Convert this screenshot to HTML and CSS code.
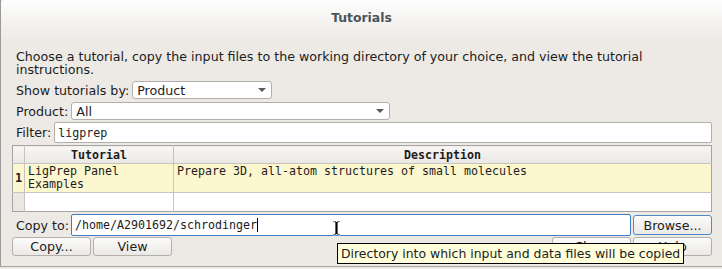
FILE: index.html
```html
<!DOCTYPE html>
<html lang="en">
  <head>
    <meta charset="utf-8" />
    <title>Tutorials</title>
    <link rel="stylesheet" href="styles.css">
  </head>
  <body>
    <div class="window">
      <div class="titlebar">Tutorials</div>
      <div class="content">
        <p class="intro">Choose a tutorial, copy the input files to the working directory of your choice, and view the tutorial instructions.</p>
        <div class="row row-show">
          <span class="field-label">Show tutorials by:</span>
          <div class="combo combo-short"><span>Product</span><span class="arrow"></span></div>
        </div>
        <div class="row row-product">
          <span class="field-label">Product:</span>
          <div class="combo combo-wide"><span>All</span><span class="arrow"></span></div>
        </div>
        <div class="row row-filter">
          <span class="field-label">Filter:</span>
          <div class="text-input filter-input">ligprep</div>
        </div>
        <table class="tutorials">
          <colgroup>
            <col class="col-num">
            <col class="col-name">
            <col class="col-desc">
          </colgroup>
          <thead>
            <tr>
              <th class="corner"></th>
              <th>Tutorial</th>
              <th>Description</th>
            </tr>
          </thead>
          <tbody>
            <tr class="selected">
              <td class="num">1</td>
              <td>LigPrep Panel<br>Examples</td>
              <td>Prepare 3D, all-atom structures of small molecules</td>
            </tr>
            <tr class="empty">
              <td class="num"></td>
              <td></td>
              <td></td>
            </tr>
          </tbody>
        </table>
        <div class="row row-copy">
          <span class="field-label">Copy to:</span>
          <div class="text-input copy-input focused">/home/A2901692/schrodinger<span class="caret"></span></div>
          <button class="btn btn-browse">Browse...</button>
        </div>
        <div class="row row-buttons">
          <button class="btn">Copy...</button>
          <button class="btn">View</button>
          <span class="spacer"></span>
          <button class="btn btn-close">Close</button>
          <button class="btn">Help</button>
        </div>
      </div>
      <svg class="ibeam" width="9" height="16" viewBox="0 0 9 16">
        <path d="M1 1h2.5l1 1 1-1H8v1.5H6v11h2V15H5.5l-1-1-1 1H1v-1.5h2v-11H1z" fill="#000" stroke="#fff" stroke-width="0.8"/>
      </svg>
      <div class="tooltip">Directory into which input and data files will be copied</div>
    </div>
  </body>
</html>
```

FILE: styles.css
```css
* {
  box-sizing: border-box;
}
body {
  margin: 0;
  background: #edeae6;
  font-family: "DejaVu Sans", sans-serif;
  font-size: 12.65px;
  color: #1c1c1c;
}
.window {
  position: relative;
  height: 267px;
  border-left: 1px solid #9c9a98;
  border-bottom: 1px solid #a8a6a4;
  background: #edeae6;
}
.titlebar {
  height: 40px;
  padding-top: 10px;
  text-align: center;
  font-weight: bold;
  font-size: 12.4px;
  color: #4b545b;
  background: linear-gradient(#fdfdfd, #f3f2f0 60%, #eeebe7);
  border-top-left-radius: 4px;
}
.content {
  padding: 0 10px 0 11px;
}
.intro {
  margin: 10px 0 0;
  padding-left: 4px;
  line-height: 13px;
}
.row {
  display: flex;
  align-items: center;
  gap: 3px;
}
.field-label {
  padding-left: 4px;
}
.row-show {
  margin-top: 5px;
}
.row-product {
  margin-top: 3px;
}
.row-filter {
  margin-top: 2px;
}
.combo {
  height: 18px;
  border: 1px solid #b3afab;
  border-radius: 3px;
  background: #fff;
  display: flex;
  align-items: center;
  justify-content: space-between;
  padding: 0 5px 0 4px;
}
.combo-short {
  width: 140px;
}
.combo-wide {
  width: 319px;
}
.arrow {
  width: 0;
  height: 0;
  border-left: 4px solid transparent;
  border-right: 4px solid transparent;
  border-top: 4px solid #5a5a5a;
}
.text-input {
  height: 21px;
  flex: 1;
  background: #fff;
  border: 1px solid #b3afab;
  border-radius: 2px;
  padding: 0 3px;
  display: flex;
  align-items: center;
  font-family: "DejaVu Sans Mono", monospace;
  font-size: 11.63px;
}
.focused {
  border-color: #3a7dc0;
}
.caret {
  display: inline-block;
  width: 1px;
  height: 14px;
  background: #000;
}
.tutorials {
  margin-top: 2px;
  width: 700px;
  table-layout: fixed;
  border-collapse: collapse;
  border: 1px solid #a6a4a2;
  font-family: "DejaVu Sans Mono", monospace;
  font-size: 11.63px;
}
.col-num {
  width: 12px;
}
.col-name {
  width: 149px;
}
.tutorials th {
  height: 18px;
  padding: 0;
  font-weight: bold;
  background: linear-gradient(#f7f6f4, #ebe8e4);
  border-right: 1px solid #c6c3c0;
  border-bottom: 1px solid #c6c3c0;
}
.tutorials th:last-child {
  border-right: none;
}
.tutorials td {
  padding: 0 0 0 3px;
  vertical-align: top;
  line-height: 13px;
  border-right: 1px solid #c6c3c0;
}
.tutorials td:last-child {
  border-right: none;
}
.selected td {
  height: 29px;
  padding-top: 1px;
  background: #fdf7cf;
  border-bottom: 1px solid #c6c3c0;
}
.tutorials td.num {
  padding: 0;
  text-align: center;
  vertical-align: middle;
  font-weight: bold;
  font-size: 12px;
  background: #ebe8e4;
}
.selected td.num {
  background: #fdf7cf;
}
.empty td {
  height: 19px;
  background: #fff;
}
.row-copy {
  margin-top: 2px;
  gap: 0;
}
.row-copy .field-label {
  margin-right: 2px;
}
.copy-input {
  height: 22px;
}
.btn {
  height: 20px;
  width: 79px;
  padding: 0;
  font-family: "DejaVu Sans", sans-serif;
  font-size: 12.65px;
  color: #1c1c1c;
  border: 1px solid #b3afab;
  border-radius: 3px;
  background: linear-gradient(#fbfbfa, #ebe9e6);
}
.btn-browse {
  margin-left: 2px;
  border-color: #4a8cc9;
}
.row-buttons {
  margin-top: 1px;
  gap: 2px;
  padding-right: 0;
}
.row-buttons .btn {
  height: 19px;
  padding-bottom: 1px;
}
.spacer {
  flex: 1;
}
.ibeam {
  position: absolute;
  left: 331px;
  top: 220px;
}
.tooltip {
  position: absolute;
  left: 336px;
  top: 243px;
  height: 21px;
  padding: 0 3px;
  line-height: 19px;
  font-size: 12.45px;
  background: #ffffdc;
  border: 1px solid #000;
  white-space: nowrap;
}
```
